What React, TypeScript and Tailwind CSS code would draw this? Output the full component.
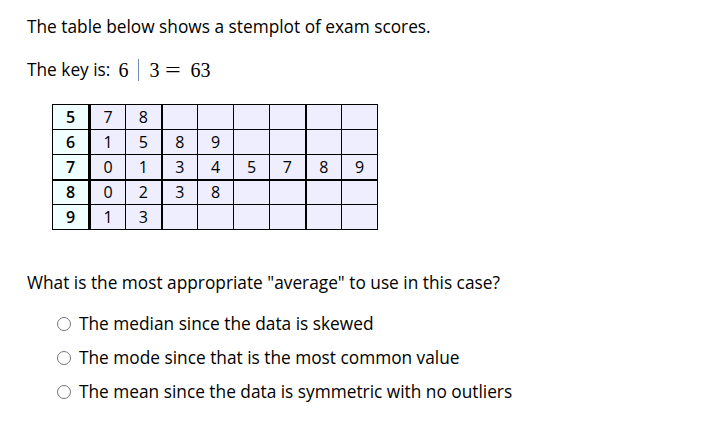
import React from "react";

const rows: { stem: string; leaves: string[] }[] = [
  { stem: "5", leaves: ["7", "8"] },
  { stem: "6", leaves: ["1", "5", "8", "9"] },
  { stem: "7", leaves: ["0", "1", "3", "4", "5", "7", "8", "9"] },
  { stem: "8", leaves: ["0", "2", "3", "8"] },
  { stem: "9", leaves: ["1", "3"] },
];

const options = [
  "The median since the data is skewed",
  "The mode since that is the most common value",
  "The mean since the data is symmetric with no outliers",
];

export default function App() {
  return (
    <div
      className="w-[707px] h-[426px] bg-white text-black pl-[27px] pt-[15px]"
      style={{ fontFamily: '"Open Sans", "DejaVu Sans", sans-serif' }}
    >
      <p className="text-[17.3px] leading-6">The table below shows a stemplot of exam scores.</p>
      <div className="text-[17.3px] leading-6 mt-[19px] flex items-center">
        <span>The key is:</span>
        <span
          className="ml-[8px] text-[20px] flex items-center"
          style={{ fontFamily: '"Liberation Serif", "DejaVu Serif", serif' }}
        >
          6
          <span className="inline-block w-px h-[22px] bg-[#6f8fb3] mx-[10px]" />
          3
          <span className="ml-[5px] mr-[8px] inline-block w-[18px] text-center scale-x-[1.4]">=</span>
          63
        </span>
      </div>
      <table className="ml-[25px] mt-[22px] border-collapse text-[16px]">
        <tbody>
          {rows.map((r, ri) => (
            <tr key={ri} className="h-[25px]">
              <td
                className={`w-[37px] p-0 text-center bg-[#f0ffff] border border-black border-r-[3px] font-semibold leading-none ${
                  ri === 3 ? "border-t-2" : ""
                }`}
              >
                {r.stem}
              </td>
              {Array.from({ length: 8 }).map((_, ci) => (
                <td
                  key={ci}
                  className={`w-[36px] p-0 text-center bg-[#eeeeff] border border-black leading-none ${
                    ci === 1 || ci === 5 ? "border-r-2" : ""
                  } ${ri === 3 ? "border-t-2" : ""}`}
                >
                  {r.leaves[ci] ?? ""}
                </td>
              ))}
            </tr>
          ))}
        </tbody>
      </table>
      <p className="text-[17.3px] leading-6 mt-[41px]">
        What is the most appropriate "average" to use in this case?
      </p>
      <div className="mt-[17px] ml-[30px] flex flex-col gap-[10px]">
        {options.map((o) => (
          <label key={o} className="flex items-center h-6 text-[17.3px]">
            <span className="inline-block w-[14px] h-[14px] rounded-full border border-[#767676] bg-white mr-[8px] shrink-0" />
            {o}
          </label>
        ))}
      </div>
    </div>
  );
}
